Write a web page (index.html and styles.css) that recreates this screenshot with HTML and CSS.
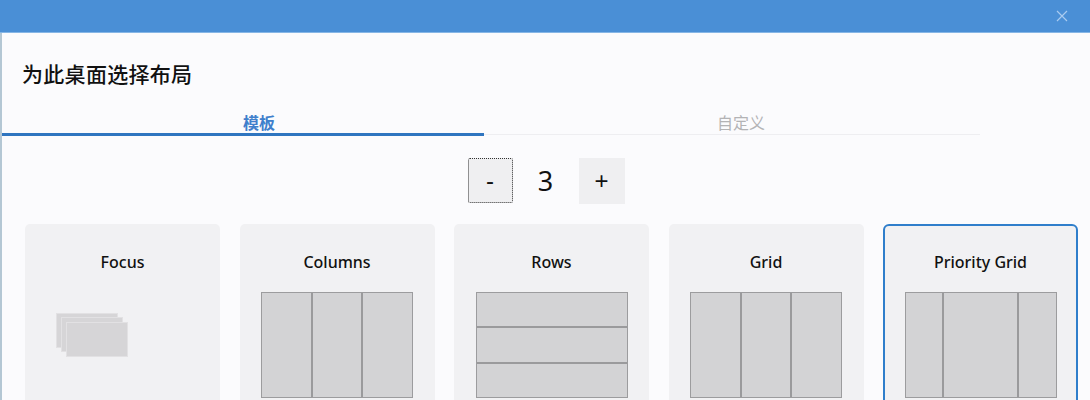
FILE: index.html
```html
<!DOCTYPE html>
<html lang="zh-CN">
<head>
<meta charset="utf-8">
<title>为此桌面选择布局</title>
<link rel="stylesheet" href="styles.css">
</head>
<body>
<div class="window">
  <div class="titlebar">
    <svg class="close" width="12" height="12" viewBox="0 0 12 12"><path d="M1 1L11 11M11 1L1 11" stroke="#a9cbf0" stroke-width="1.2" fill="none"/></svg>
  </div>
  <div class="body">
    <h1 class="title">为此桌面选择布局</h1>
    <div class="tabs">
      <div class="tab active"><span>模板</span></div>
      <div class="tab"><span>自定义</span></div>
    </div>
    <div class="stepper">
      <button class="step minus">-</button>
      <span class="count">3</span>
      <button class="step plus">+</button>
    </div>
    <div class="cards">
      <div class="card">
        <div class="label">Focus</div>
        <svg class="preview" width="152" height="106" viewBox="0 0 152 106">
          <rect x="9.5" y="21.5" width="61" height="34" fill="#d6d5d7" stroke="#e2e1e3"/>
          <rect x="14.5" y="25.5" width="61" height="34" fill="#d6d5d7" stroke="#e2e1e3"/>
          <rect x="19.5" y="30.5" width="61" height="34" fill="#d6d5d7" stroke="#e2e1e3"/>
        </svg>
      </div>
      <div class="card">
        <div class="label">Columns</div>
        <div class="preview cols"><div></div><div></div><div></div></div>
      </div>
      <div class="card">
        <div class="label">Rows</div>
        <div class="preview rows"><div></div><div></div><div></div></div>
      </div>
      <div class="card">
        <div class="label">Grid</div>
        <div class="preview cols"><div></div><div></div><div></div></div>
      </div>
      <div class="card selected">
        <div class="label">Priority Grid</div>
        <div class="preview prio"><div></div><div></div><div></div></div>
      </div>
    </div>
  </div>
</div>
</body>
</html>
```

FILE: styles.css
```css
html, body {
  margin: 0;
  padding: 0;
  background: #fbfbfd;
}
.window {
  width: 1090px;
  height: 400px;
  overflow: hidden;
  display: flex;
  flex-direction: column;
  font-family: "Noto Sans", "Noto Sans CJK SC", sans-serif;
}
.titlebar {
  height: 32px;
  flex: none;
  background: #4a8fd6;
  border-bottom: 1px solid #86b6e6;
  position: relative;
}
.close {
  position: absolute;
  left: 1056px;
  top: 10px;
}
.body {
  flex: 1;
  border-left: 2px solid #b4c7d4;
  background: #fbfbfd;
}
.title {
  margin: 25px 0 0 20px;
  font-family: "Noto Sans CJK SC", sans-serif;
  font-weight: 500;
  font-size: 21px;
  line-height: 30px;
  color: #111;
  letter-spacing: 0.3px;
}
.tabs {
  display: flex;
  align-items: flex-start;
  padding-top: 23px;
}
.tab {
  padding-bottom: 3px;
  border-bottom: 1px solid #eeeef1;
  font-family: "Noto Sans CJK SC", sans-serif;
  font-size: 16px;
  line-height: 22px;
  color: #b3b3b5;
  display: flex;
  justify-content: center;
  box-sizing: border-box;
}
.tab:first-child {
  width: 482px;
  padding-left: 32px;
  height: 25px;
}
.tab:last-child {
  width: 496px;
  padding-left: 18px;
  height: 24px;
}
.tab.active {
  color: #3f7fcc;
  font-weight: 700;
  padding-bottom: 0;
  border-bottom: 3px solid #2f75c0;
}
.stepper {
  display: flex;
  justify-content: center;
  align-items: center;
  gap: 13px;
  margin-top: 21px;
  height: 47px;
}
.step {
  width: 46px;
  height: 46px;
  border: none;
  background: #efeff1;
  font-family: "Liberation Sans", sans-serif;
  font-size: 24px;
  color: #111;
  padding: 0;
  display: flex;
  align-items: center;
  justify-content: center;
}
.step.minus {
  border: 1px dotted #333;
  border-radius: 2px;
  width: 45px;
  height: 45px;
}
.count {
  width: 40px;
  text-align: center;
  font-family: "Noto Sans", sans-serif;
  font-size: 27px;
  color: #111;
}
.cards {
  display: grid;
  grid-template-columns: repeat(5, 195px);
  column-gap: 19.5px;
  margin: 20px 0 0 23px;
}
.card {
  height: 200px;
  background: #f1f1f3;
  border-radius: 5px;
  border: 2px solid transparent;
  box-sizing: border-box;
  display: flex;
  flex-direction: column;
  align-items: center;
}
.card.selected {
  border-color: #2f7ecb;
  border-radius: 6px;
}
.label {
  padding-top: 25px;
  line-height: 22px;
  font-size: 16px;
  font-weight: 500;
  color: #111;
  height: 22px;
  margin-bottom: 19px;
}
.preview {
  width: 152px;
  height: 106px;
  box-sizing: border-box;
  flex: none;
}
.cols, .rows, .prio {
  display: flex;
  border: 1px solid #9c9c9e;
  background: #d3d3d5;
}
.rows {
  flex-direction: column;
}
.cols > div, .rows > div {
  flex: 1;
}
.cols > div + div {
  border-left: 2px solid #9a9a9c;
}
.rows > div + div {
  border-top: 2px solid #9a9a9c;
}
.prio > div:nth-child(1) { width: 36px; flex: none; }
.prio > div:nth-child(2) { flex: 1; border-left: 2px solid #9a9a9c; border-right: 2px solid #9a9a9c; }
.prio > div:nth-child(3) { width: 37px; flex: none; }
```
